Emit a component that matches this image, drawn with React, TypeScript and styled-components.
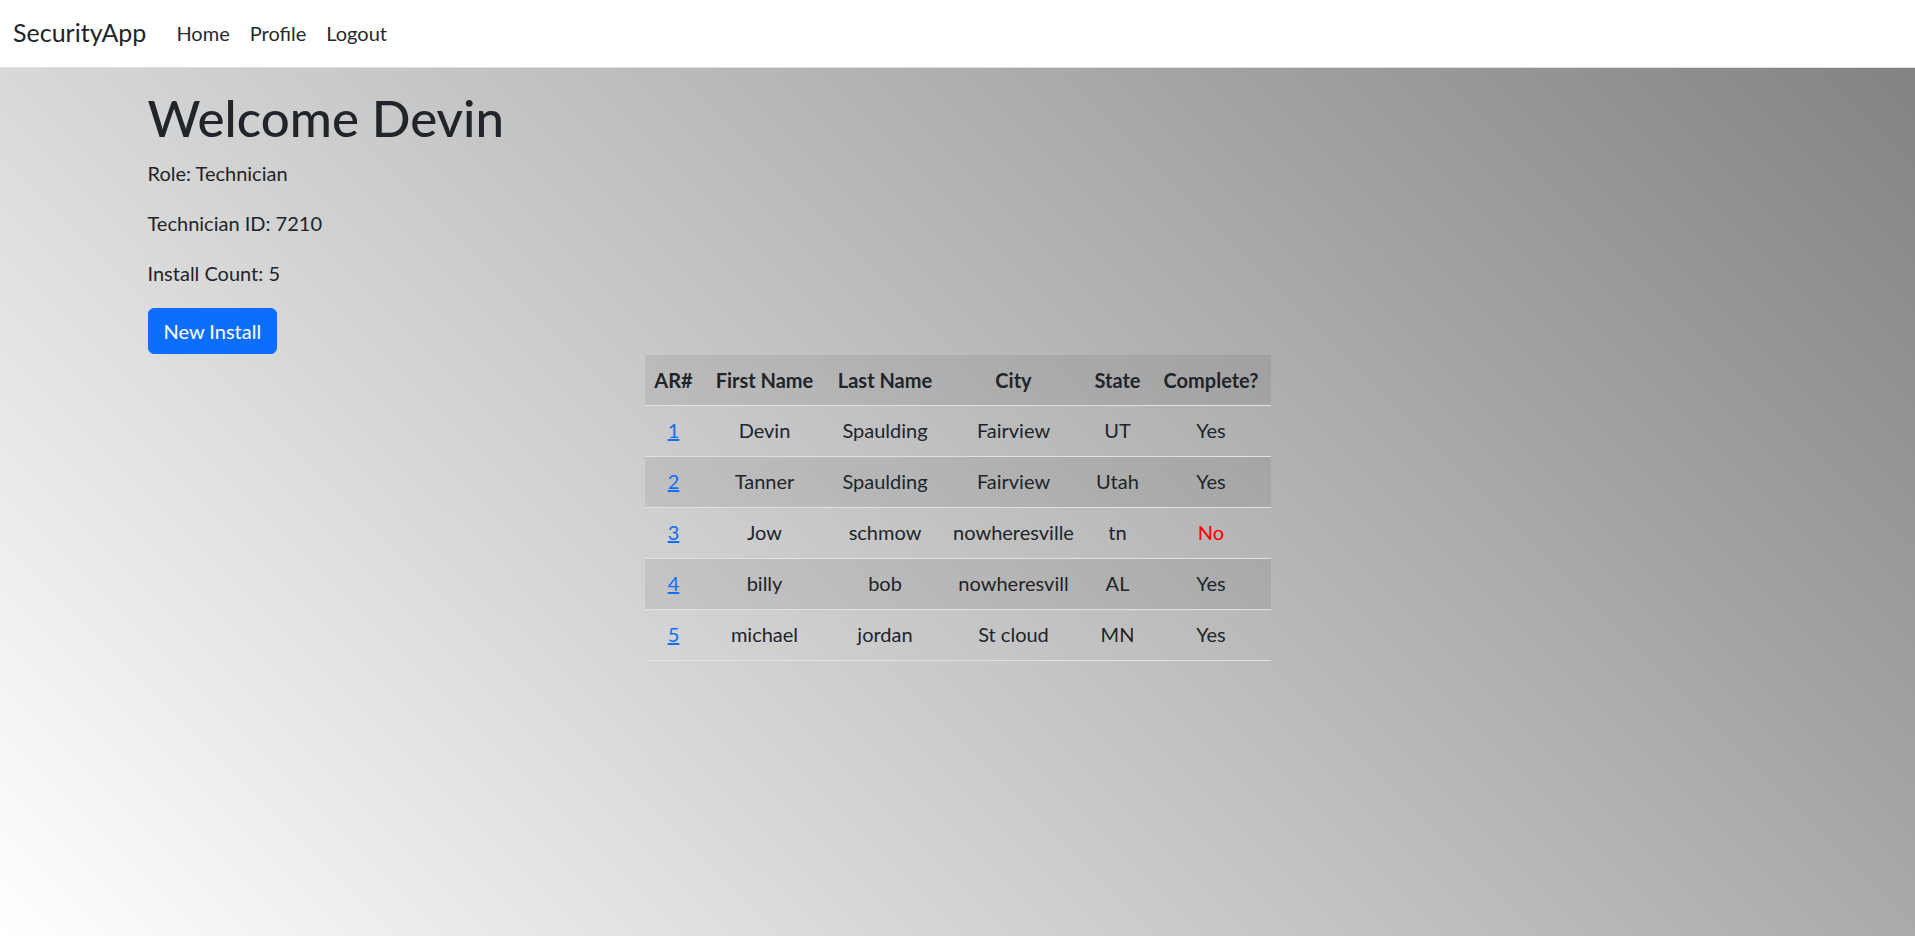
import React from "react";
import styled, { createGlobalStyle } from "styled-components";

const GlobalStyle = createGlobalStyle`
  *, *::before, *::after { box-sizing: border-box; }
  html, body { margin: 0; padding: 0; }
  body {
    font-family: Lato, "Noto Sans", sans-serif;
    font-size: 20px;
    line-height: 1.5;
    color: #212529;
  }
`;

const Page = styled.div`
  min-height: 100vh;
  background: linear-gradient(45deg, #ffffff, #808080);
`;

const NavBar = styled.nav`
  height: 68px;
  background: #ffffff;
  border-bottom: 1px solid #e2e2e2;
  display: flex;
  align-items: center;
  padding: 0 13px 2px;
`;

const Brand = styled.a`
  font-size: 25px;
  color: #212529;
  text-decoration: none;
  margin-right: 20px;
  line-height: 1.5;
`;

const NavList = styled.ul`
  display: flex;
  list-style: none;
  margin: 0;
  padding: 0;
`;

const NavLink = styled.a`
  display: block;
  padding: 0 10px;
  font-size: 20px;
  color: #262a2e;
  text-decoration: none;
`;

const Container = styled.main`
  width: 1650px;
  margin: 0 auto;
  padding: 20px 15px 0;
`;

const Title = styled.h1`
  font-size: 51px;
  font-weight: 500;
  line-height: 60px;
  margin: 0 0 10px;
  color: #212529;
`;

const Info = styled.p`
  margin: 0 0 20px;
  line-height: 30px;
`;

const PrimaryButton = styled.button`
  display: block;
  font-family: inherit;
  font-size: 20px;
  line-height: 30px;
  padding: 7px 15px;
  color: #ffffff;
  background: #0d6efd;
  border: 1px solid #0d6efd;
  border-radius: 6px;
  cursor: pointer;
`;

const Table = styled.table`
  width: 626px;
  margin: 1px auto 0;
  border-collapse: collapse;
  table-layout: fixed;
`;

const HeadCell = styled.th<{ $w: number }>`
  width: ${(p) => p.$w}px;
  padding: 10px 0;
  line-height: 30px;
  font-weight: 700;
  text-align: center;
  white-space: nowrap;
  border-bottom: 1px solid #dee2e6;
`;

const HeadRow = styled.tr`
  background: rgba(0, 0, 0, 0.065);
`;

const BodyRow = styled.tr`
  &:nth-child(even) {
    background: rgba(0, 0, 0, 0.065);
  }
`;

const Cell = styled.td<{ $danger?: boolean }>`
  padding: 9px 0 11px;
  line-height: 30px;
  text-align: center;
  white-space: nowrap;
  border-bottom: 1px solid #dee2e6;
  color: ${(p) => (p.$danger ? "#ff0000" : "#212529")};
`;

const RowLink = styled.a`
  color: #0d6efd;
  text-decoration: underline;
`;

const columns = [
  { label: "AR#", w: 58 },
  { label: "First Name", w: 124 },
  { label: "Last Name", w: 117 },
  { label: "City", w: 140 },
  { label: "State", w: 68 },
  { label: "Complete?", w: 119 },
];

const installs = [
  { id: 1, first: "Devin", last: "Spaulding", city: "Fairview", state: "UT", done: true },
  { id: 2, first: "Tanner", last: "Spaulding", city: "Fairview", state: "Utah", done: true },
  { id: 3, first: "Jow", last: "schmow", city: "nowheresville", state: "tn", done: false },
  { id: 4, first: "billy", last: "bob", city: "nowheresvill", state: "AL", done: true },
  { id: 5, first: "michael", last: "jordan", city: "St cloud", state: "MN", done: true },
];

export default function App() {
  return (
    <Page>
      <GlobalStyle />
      <NavBar>
        <Brand href="#">SecurityApp</Brand>
        <NavList>
          <li><NavLink href="#">Home</NavLink></li>
          <li><NavLink href="#">Profile</NavLink></li>
          <li><NavLink href="#">Logout</NavLink></li>
        </NavList>
      </NavBar>
      <Container>
        <Title>Welcome Devin</Title>
        <Info>Role: Technician</Info>
        <Info>Technician ID: 7210</Info>
        <Info>Install Count: 5</Info>
        <PrimaryButton>New Install</PrimaryButton>
        <Table>
          <thead>
            <HeadRow>
              {columns.map((c) => (
                <HeadCell key={c.label} $w={c.w}>{c.label}</HeadCell>
              ))}
            </HeadRow>
          </thead>
          <tbody>
            {installs.map((r) => (
              <BodyRow key={r.id}>
                <Cell><RowLink href="#">{r.id}</RowLink></Cell>
                <Cell>{r.first}</Cell>
                <Cell>{r.last}</Cell>
                <Cell>{r.city}</Cell>
                <Cell>{r.state}</Cell>
                <Cell $danger={!r.done}>{r.done ? "Yes" : "No"}</Cell>
              </BodyRow>
            ))}
          </tbody>
        </Table>
      </Container>
    </Page>
  );
}
